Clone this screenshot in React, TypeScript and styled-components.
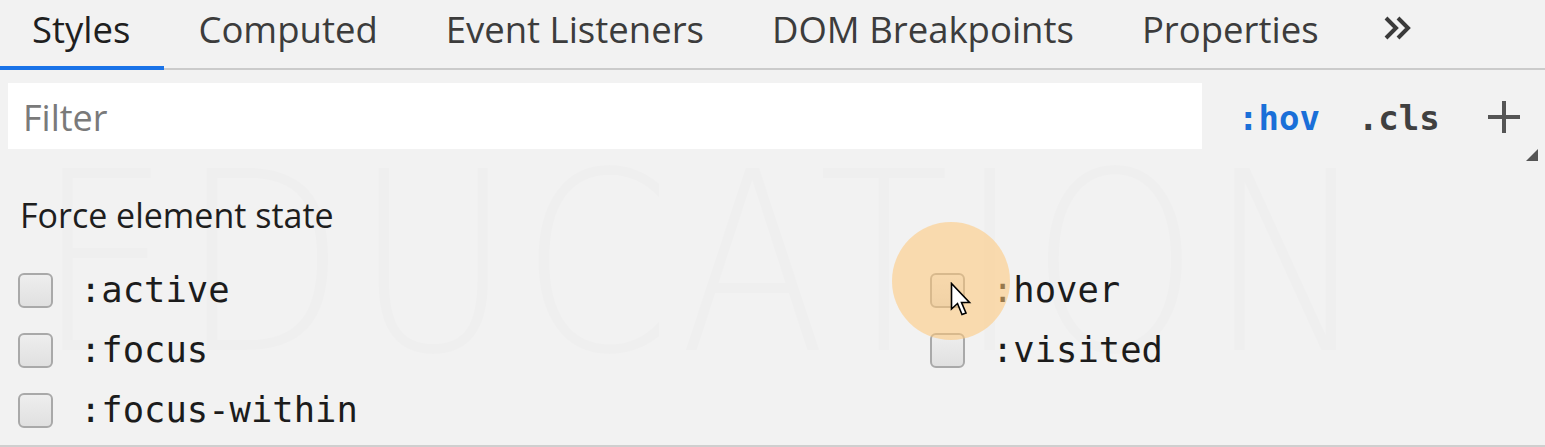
import React from "react";
import styled, { createGlobalStyle } from "styled-components";

const Global = createGlobalStyle`
  html, body { margin: 0; padding: 0; background: #f2f2f2; }
  body { width: 1545px; height: 447px; overflow: hidden; }
`;

const Panel = styled.div`
  position: relative;
  width: 1545px;
  height: 447px;
  box-sizing: border-box;
  background: #f2f2f2;
  border-bottom: 2px solid #cfcfcf;
  font-family: "Open Sans", "Noto Sans", sans-serif;
  overflow: hidden;
`;

const TabBar = styled.div`
  display: flex;
  align-items: stretch;
  height: 70px;
  box-sizing: border-box;
  border-bottom: 2px solid #cbcbcb;
`;

const Tab = styled.div<{ $active?: boolean }>`
  position: relative;
  display: flex;
  align-items: center;
  padding: 0 34px 10px;
  font-size: 36.5px;
  color: ${(p) => (p.$active ? "#1f1f1f" : "#3c3c3c")};
  white-space: nowrap;
  &:first-child {
    padding-left: 32px;
  }
  &::after {
    content: "";
    position: absolute;
    left: 0;
    right: 0;
    bottom: -2px;
    height: 4px;
    background: ${(p) => (p.$active ? "#1a73e8" : "transparent")};
  }
`;

const More = styled.div`
  display: flex;
  align-items: center;
  padding: 0 0 12px 30px;
  color: #444;
`;

const FilterRow = styled.div`
  display: flex;
  align-items: center;
  height: 92px;
  padding-left: 8px;
`;

const FilterBox = styled.div`
  width: 1194px;
  height: 66px;
  box-sizing: border-box;
  background: #ffffff;
  display: flex;
  align-items: center;
  padding: 2px 0 0 15px;
  font-size: 36px;
  color: #7a7a7a;
`;

const ToolButton = styled.div<{ $blue?: boolean; $ml: number }>`
  margin-left: ${(p) => p.$ml}px;
  font-family: "DejaVu Sans Mono", "Liberation Mono", monospace;
  font-weight: bold;
  font-size: 34px;
  color: ${(p) => (p.$blue ? "#1a6fd8" : "#404040")};
  padding-top: 4px;
`;

const PlusWrap = styled.div`
  position: relative;
  margin-left: 46px;
  width: 36px;
  height: 36px;
  margin-top: 2px;
`;

const Corner = styled.div`
  position: absolute;
  right: -16px;
  bottom: -26px;
  width: 0;
  height: 0;
  border-left: 12px solid transparent;
  border-bottom: 12px solid #555;
`;

const Section = styled.div`
  padding: 28px 0 0 20px;
`;

const Heading = styled.div`
  font-size: 34px;
  color: #1e1e1e;
  line-height: 50px;
`;

const Grid = styled.div`
  display: grid;
  grid-template-columns: 912px 1fr;
  grid-auto-rows: 60px;
  margin-top: 20px;
  margin-left: -2px;
`;

const Row = styled.label`
  display: flex;
  align-items: center;
  gap: 27px;
`;

const Box = styled.span`
  width: 35px;
  height: 35px;
  box-sizing: border-box;
  border: 2px solid #a9a9a9;
  border-radius: 6px;
  background: linear-gradient(#eeeeee, #e0e0e0);
`;

const Label = styled.span`
  font-family: "DejaVu Sans Mono", "Liberation Mono", monospace;
  font-size: 35.5px;
  color: #1c1c1c;
  padding-bottom: 2px;
`;

const Watermark = styled.div`
  position: absolute;
  left: 36px;
  top: 118px;
  font-family: "DejaVu Sans", sans-serif;
  font-weight: 200;
  font-size: 250px;
  letter-spacing: 10px;
  color: rgba(0, 0, 0, 0.011);
  transform: scaleX(0.86);
  transform-origin: left top;
  pointer-events: none;
  white-space: nowrap;
`;

const Highlight = styled.div`
  position: absolute;
  left: 892px;
  top: 222px;
  width: 118px;
  height: 118px;
  border-radius: 50%;
  background: rgba(255, 198, 118, 0.55);
  pointer-events: none;
`;

const Cursor = styled.svg`
  position: absolute;
  left: 950px;
  top: 282px;
`;

const tabs = ["Styles", "Computed", "Event Listeners", "DOM Breakpoints", "Properties"];
const states: [string, string | null][] = [
  [":active", ":hover"],
  [":focus", ":visited"],
  [":focus-within", null],
];

export default function App() {
  return (
    <>
      <Global />
      <Panel>
        <Watermark aria-hidden>EDUCATION</Watermark>
        <TabBar>
          {tabs.map((t, i) => (
            <Tab key={t} $active={i === 0}>
              {t}
            </Tab>
          ))}
          <More>
            <svg width="30" height="26" viewBox="0 0 30 26">
              <path d="M3 3 L13 13 L3 23 M15 3 L25 13 L15 23" fill="none" stroke="#3a3a3a" strokeWidth="4" />
            </svg>
          </More>
        </TabBar>
        <FilterRow>
          <FilterBox>Filter</FilterBox>
          <ToolButton $blue $ml={36}>:hov</ToolButton>
          <ToolButton $ml={38}>.cls</ToolButton>
          <PlusWrap>
            <svg width="36" height="36" viewBox="0 0 36 36">
              <path d="M18 2 V34 M2 18 H34" stroke="#555" strokeWidth="4" />
            </svg>
            <Corner />
          </PlusWrap>
        </FilterRow>
        <Section>
          <Heading>Force element state</Heading>
          <Grid>
            {states.flatMap(([a, b]) => [
              <Row key={a}>
                <Box />
                <Label>{a}</Label>
              </Row>,
              b ? (
                <Row key={b}>
                  <Box />
                  <Label>{b}</Label>
                </Row>
              ) : (
                <span key={a + "-empty"} />
              ),
            ])}
          </Grid>
        </Section>
        <Highlight />
        <Cursor width="24" height="36" viewBox="0 0 24 36">
          <path
            d="M1.5 1.5 L1.5 27 L7.5 21.5 L12 32.5 L16 31 L11.5 20.5 L19.5 20.5 Z"
            fill="#ffffff"
            stroke="#000"
            strokeWidth="1.6"
            strokeLinejoin="miter"
          />
        </Cursor>
      </Panel>
    </>
  );
}
